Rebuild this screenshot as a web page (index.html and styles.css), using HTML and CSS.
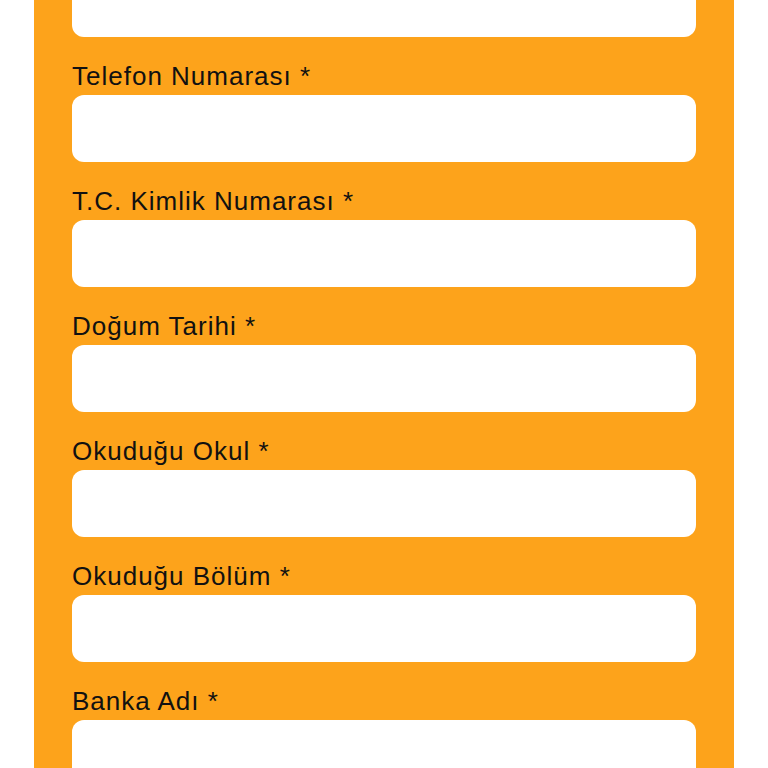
FILE: index.html
```html
<!DOCTYPE html>
<html lang="tr">

<head>
    <meta charset="UTF-8">
    <meta name="viewport" content="width=device-width, initial-scale=1.0">
    <title>Başvuru Formu</title>
    <link rel="stylesheet" href="styles.css">
</head>

<body>
    <div class="panel">
        <form class="form">
            <input type="text" class="field first">

            <label for="telefon">Telefon Numarası *</label>
            <input type="tel" id="telefon" class="field">

            <label for="tc">T.C. Kimlik Numarası *</label>
            <input type="text" id="tc" class="field">

            <label for="dogum">Doğum Tarihi *</label>
            <input type="text" id="dogum" class="field">

            <label for="okul">Okuduğu Okul *</label>
            <input type="text" id="okul" class="field">

            <label for="bolum">Okuduğu Bölüm *</label>
            <input type="text" id="bolum" class="field">

            <label for="banka">Banka Adı *</label>
            <input type="text" id="banka" class="field">
        </form>
    </div>
</body>

</html>
```

FILE: styles.css
```css
body {
    margin: 0;
    background-color: #ffffff;
    font-family: "Liberation Sans", Arial, sans-serif;
    overflow: hidden;
}

.panel {
    margin: 0 34px;
    padding: 0 38px 40px;
    background-color: #fda31b;
    min-height: 768px;
}

.form {
    display: flex;
    flex-direction: column;
    margin-top: -30px;
}

label {
    font-size: 26px;
    line-height: 30px;
    letter-spacing: 1px;
    color: #111111;
    margin: 24px 0 4px;
}

.field {
    display: block;
    height: 67px;
    border: none;
    border-radius: 12px;
    background-color: #ffffff;
    padding: 0 16px;
    font-size: 20px;
    box-sizing: border-box;
    width: 100%;
}
```
